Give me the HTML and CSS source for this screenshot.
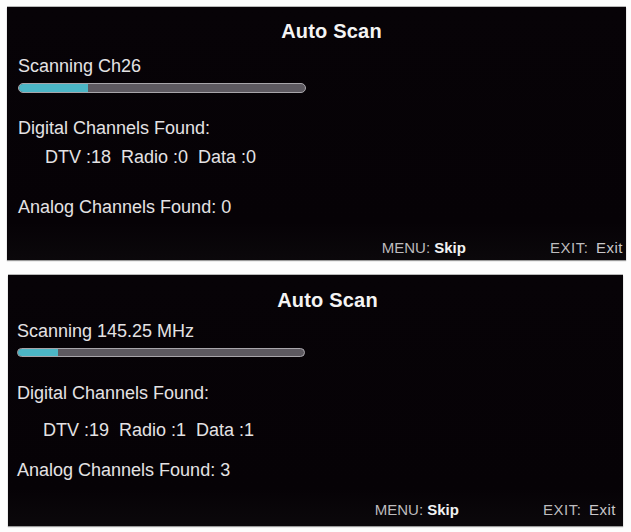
FILE: index.html
```html
<!DOCTYPE html>
<html>
<head>
<meta charset="utf-8">
<link rel="stylesheet" href="styles.css">
</head>
<body>
<div class="page">
  <section class="panel panel-a">
    <div class="title">Auto Scan</div>
    <div class="line scanning">Scanning Ch26</div>
    <div class="bar"><div class="fill" style="width:24%"></div></div>
    <div class="line digital">Digital Channels Found:</div>
    <div class="line counts">DTV :18&nbsp; Radio :0&nbsp; Data :0</div>
    <div class="line analog">Analog Channels Found: 0</div>
    <div class="footer">
      <span class="hint"><span class="key">MENU:</span> <b class="act">Skip</b></span>
      <span class="hint exit"><span class="key">EXIT:</span> Exit</span>
    </div>
  </section>
  <section class="panel panel-b">
    <div class="title">Auto Scan</div>
    <div class="line scanning">Scanning 145.25 MHz</div>
    <div class="bar"><div class="fill" style="width:14%"></div></div>
    <div class="line digital">Digital Channels Found:</div>
    <div class="line counts">DTV :19&nbsp; Radio :1&nbsp; Data :1</div>
    <div class="line analog">Analog Channels Found: 3</div>
    <div class="footer">
      <span class="hint"><span class="key">MENU:</span> <b class="act">Skip</b></span>
      <span class="hint exit"><span class="key">EXIT:</span> Exit</span>
    </div>
  </section>
</div>
</body>
</html>
```
FILE: styles.css
```css
html, body {
  margin: 0;
  padding: 0;
  background: #fdfdfd;
}
body {
  font-family: "Liberation Sans", Arial, sans-serif;
  color: #e4e2e4;
  width: 631px;
  height: 532px;
  overflow: hidden;
}
.page {
  display: flex;
  flex-direction: column;
  padding-top: 7px;
  gap: 15px;
}
.panel {
  display: flex;
  flex-direction: column;
  background: linear-gradient(#070307 0%, #060206 85%, #0b080b 100%);
  box-shadow: 0 -1px 0 #b8b8b8, 0 1px 1px #9a9a9a;
  box-sizing: border-box;
}
.panel-a {
  margin-left: 7px;
  width: 619px;
  height: 253px;
  padding: 0 3px 1px 11px;
}
.panel-b {
  margin-left: 8px;
  width: 615px;
  height: 251px;
  padding: 0 7px 5px 9px;
}
.title {
  font-size: 20px;
  font-weight: bold;
  line-height: 24px;
  color: #f4f4f4;
  text-align: center;
  padding-left: 22px;
  letter-spacing: 0.2px;
}
.panel-a .title { margin-top: 12px; }
.panel-b .title { margin-top: 13px; }
.line {
  font-size: 18px;
  line-height: 22px;
  white-space: nowrap;
}
.panel-a .scanning { margin-top: 12px; }
.panel-b .scanning { margin-top: 8px; }
.bar {
  width: 286px;
  height: 8px;
  border: 1px solid #a8a5aa;
  border-radius: 5px;
  background: #5d5960;
  overflow: hidden;
  margin-top: 6px;
}
.panel-b .bar { height: 7px; }
.fill {
  height: 100%;
  background: #4cb6c6;
  border-radius: 4px 0 0 4px;
}
.panel-a .digital { margin-top: 24px; }
.panel-b .digital { margin-top: 25px; }
.counts { padding-left: 27px; }
.panel-a .counts { margin-top: 7px; }
.panel-b .counts { margin-top: 15px; padding-left: 26px; }
.panel-a .analog { margin-top: 28px; }
.panel-b .analog { margin-top: 18px; }
.footer {
  margin-top: auto;
  display: flex;
  justify-content: flex-end;
  gap: 84px;
  font-size: 15px;
  line-height: 22px;
  color: #c9c7c9;
}
.exit {
  letter-spacing: 0.5px;
  word-spacing: 3px;
}
.key {
  color: #bdbbbd;
}
.act {
  color: #f2f2f2;
  font-weight: bold;
}
```
